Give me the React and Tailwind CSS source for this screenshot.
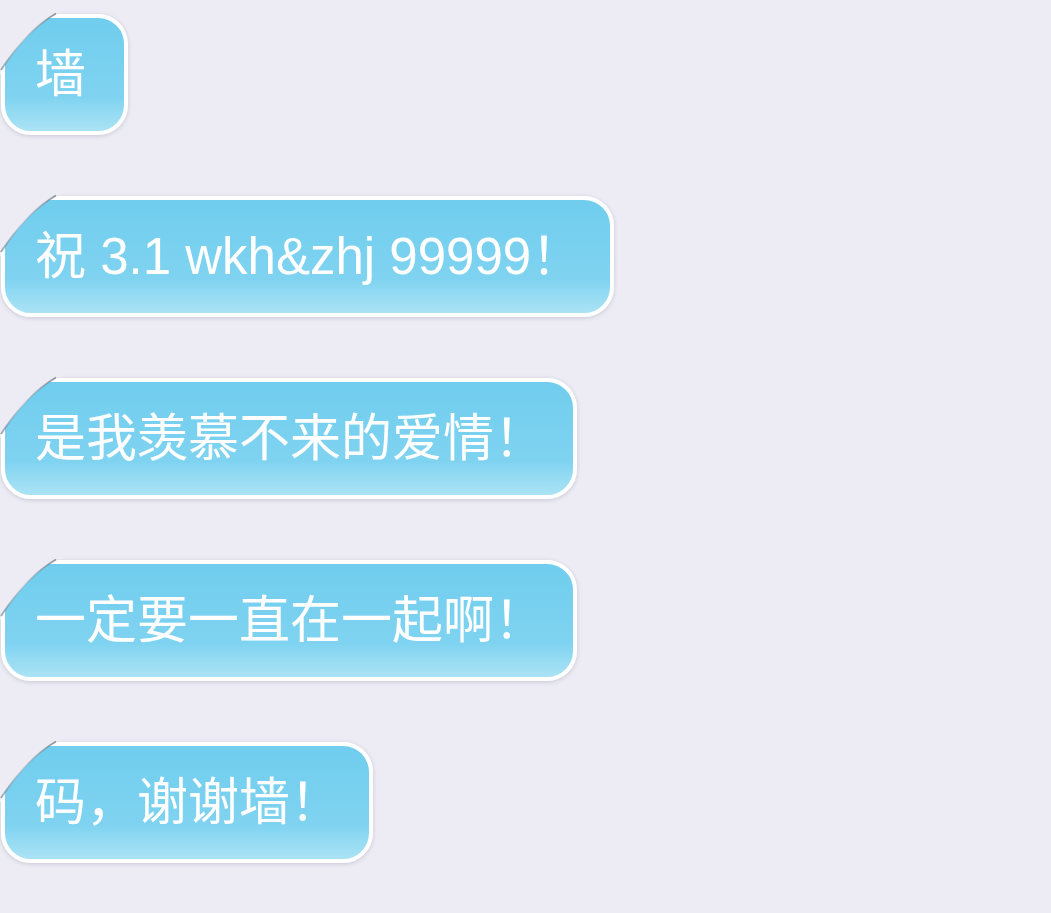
import React from 'react';

const messages = [
  { text: '墙', wide: true },
  { text: '祝 3.1 wkh&zhj 99999！' },
  { text: '是我羡慕不来的爱情！' },
  { text: '一定要一直在一起啊！' },
  { text: '码，谢谢墙！' },
];

// folded top-left corner of each bubble
const FoldCorner = () => (
  <svg
    className="absolute -left-[8px] -top-[8px]"
    width="66"
    height="64"
    viewBox="0 0 66 64"
  >
    <defs>
      <linearGradient id="fold" x1="0" y1="1" x2="1" y2="0">
        <stop offset="0" stopColor="#5d6b78" stopOpacity="0.6" />
        <stop offset="0.45" stopColor="#8d9ba6" stopOpacity="0.3" />
        <stop offset="1" stopColor="#5d6b78" stopOpacity="0.7" />
      </linearGradient>
    </defs>
    <path d="M0 0 H66 V3 H60 Q30 20 4 60 V64 H0 Z" fill="#edecf5" />
    <path d="M59 3.5 Q30 20 4 60" fill="none" stroke="url(#fold)" strokeWidth="1.8" />
  </svg>
);

const Bubble = ({ text, wide }) => (
  <div
    className={`relative flex h-[121px] items-center rounded-[30px] border-4 border-white bg-linear-to-b from-[#70cdee] via-[#7fd3f0] via-70% to-[#abe3f5] pl-[30px] pr-[28px] text-[51px] leading-none text-white shadow-[0_1px_4px_rgba(80,90,110,0.25)] ${
      wide ? 'w-[127px]' : ''
    }`}
  >
    <FoldCorner />
    <span className="relative whitespace-nowrap">{text}</span>
  </div>
);

export default function App() {
  return (
    <div className="flex min-h-screen w-full flex-col items-start gap-[61px] bg-[#edecf5] pl-px pt-[14px] [font-family:'Liberation_Sans','Noto_Sans_CJK_SC',sans-serif]">
      {messages.map((m, i) => (
        <Bubble key={i} text={m.text} wide={m.wide} />
      ))}
    </div>
  );
}
